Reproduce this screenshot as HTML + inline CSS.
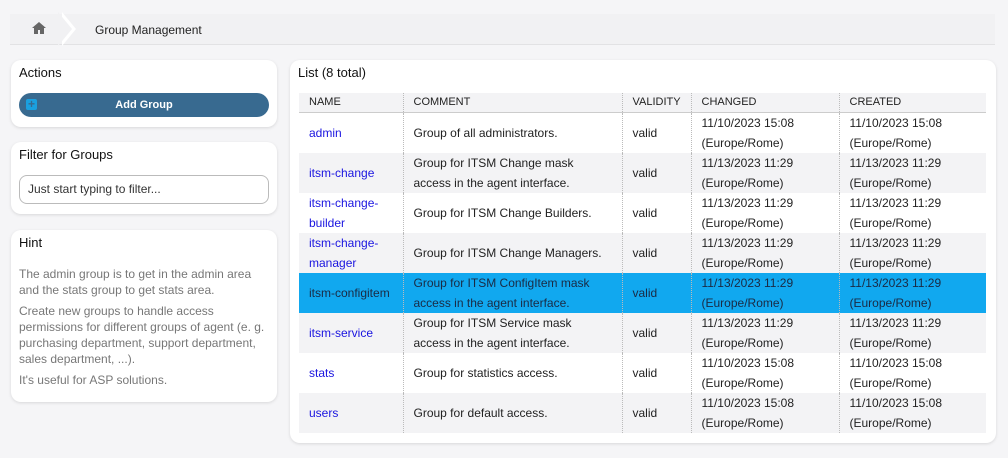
<!DOCTYPE html>
<html><head><style>
*{box-sizing:border-box;margin:0;padding:0}
body{width:1008px;height:458px;background:#f5f5f7;font-family:"Liberation Sans",Arial,sans-serif;font-size:12px;color:#222;position:relative;overflow:hidden}
.crumb{position:absolute;left:10px;top:14px;width:985px;height:31px;background:#f1f1f3;border-bottom:1px solid #e2e2e4}
.crumb .home{position:absolute;left:22px;top:8px}
.crumb .arrow{position:absolute;left:52px;top:-2px;width:0;height:0;border-top:17px solid transparent;border-bottom:17px solid transparent;border-left:14px solid #fff}
.crumb .arrow2{position:absolute;left:48px;top:-2px;width:0;height:0;border-top:17px solid transparent;border-bottom:17px solid transparent;border-left:14px solid #f1f1f3;z-index:2}
.crumb span{position:absolute;left:85px;top:9px;color:#222}
.box{position:absolute;background:#fff;border-radius:10px;box-shadow:0 1px 3px rgba(0,0,0,.12)}
.box h3{font-weight:normal;font-size:13px;position:absolute;left:8px;top:5px;color:#111}
.btn{position:absolute;left:8px;top:33px;width:250px;height:24px;background:#386a90;border-radius:12px;color:#fff;font-weight:bold;font-size:11px;text-align:center;line-height:24px}
.btn i{position:absolute;left:7px;top:6px;width:11px;height:11px;background:#1aa0e0;border-radius:2px;color:#386a90;font-style:normal;line-height:11px;font-size:12px}
.inp{position:absolute;left:8px;top:33px;width:250px;height:29px;border:1px solid #bbb;border-radius:8px;padding-left:8px;line-height:27px;color:#333}
.hint{position:absolute;left:8px;top:36px;width:252px;color:#777;line-height:16px}
.hint p{margin-bottom:5px}
table{position:absolute;left:9px;top:33px;width:687px;border-collapse:collapse}
th{height:19px;background:#f3f3f5;text-align:left;font-weight:normal;font-size:11px;padding-left:10px;border-bottom:1px solid #ccc;color:#222}
td{height:40px;padding-left:10px;line-height:20px;vertical-align:middle}
th+th,td+td{border-left:1px dotted #bbb}
tr.g td{background:#f3f3f5}
td a{color:#1a14e0;text-decoration:none}
tr.sel td{background:#11a8ef;color:#1a2a44}
tr.sel td a{color:#1a2a44}
</style></head><body>
<div class="crumb">
<svg class="home" width="14" height="12" viewBox="0 0 14 12"><path d="M7 0L0 6h2v6h4V8h2v4h4V6h2z" fill="#666"/></svg>
<div class="arrow"></div><div class="arrow2"></div>
<span>Group Management</span></div>

<div class="box" style="left:11px;top:60px;width:266px;height:67px"><h3>Actions</h3><div class="btn"><i>+</i>Add Group</div></div>
<div class="box" style="left:11px;top:142px;width:266px;height:72px"><h3>Filter for Groups</h3><div class="inp">Just start typing to filter...</div></div>
<div class="box" style="left:11px;top:230px;width:266px;height:172px"><h3>Hint</h3><div class="hint">
<p>The admin group is to get in the admin area and the stats group to get stats area.</p>
<p>Create new groups to handle access permissions for different groups of agent (e. g. purchasing department, support department, sales department, ...).</p>
<p>It's useful for ASP solutions.</p></div></div>

<div class="box" style="left:290px;top:60px;width:706px;height:383px"><h3>List (8 total)</h3>
<table>
<colgroup><col style="width:104px"><col style="width:219px"><col style="width:69px"><col style="width:148px"><col style="width:147px"></colgroup>
<tr><th>NAME</th><th>COMMENT</th><th>VALIDITY</th><th>CHANGED</th><th>CREATED</th></tr>
<tr><td><a>admin</a></td><td>Group of all administrators.</td><td>valid</td><td>11/10/2023 15:08<br>(Europe/Rome)</td><td>11/10/2023 15:08<br>(Europe/Rome)</td></tr>
<tr class="g"><td><a>itsm-change</a></td><td>Group for ITSM Change mask<br>access in the agent interface.</td><td>valid</td><td>11/13/2023 11:29<br>(Europe/Rome)</td><td>11/13/2023 11:29<br>(Europe/Rome)</td></tr>
<tr><td><a>itsm-change-<br>builder</a></td><td>Group for ITSM Change Builders.</td><td>valid</td><td>11/13/2023 11:29<br>(Europe/Rome)</td><td>11/13/2023 11:29<br>(Europe/Rome)</td></tr>
<tr class="g"><td><a>itsm-change-<br>manager</a></td><td>Group for ITSM Change Managers.</td><td>valid</td><td>11/13/2023 11:29<br>(Europe/Rome)</td><td>11/13/2023 11:29<br>(Europe/Rome)</td></tr>
<tr class="sel"><td><a>itsm-configitem</a></td><td>Group for ITSM ConfigItem mask<br>access in the agent interface.</td><td>valid</td><td>11/13/2023 11:29<br>(Europe/Rome)</td><td>11/13/2023 11:29<br>(Europe/Rome)</td></tr>
<tr class="g"><td><a>itsm-service</a></td><td>Group for ITSM Service mask<br>access in the agent interface.</td><td>valid</td><td>11/13/2023 11:29<br>(Europe/Rome)</td><td>11/13/2023 11:29<br>(Europe/Rome)</td></tr>
<tr><td><a>stats</a></td><td>Group for statistics access.</td><td>valid</td><td>11/10/2023 15:08<br>(Europe/Rome)</td><td>11/10/2023 15:08<br>(Europe/Rome)</td></tr>
<tr class="g"><td><a>users</a></td><td>Group for default access.</td><td>valid</td><td>11/10/2023 15:08<br>(Europe/Rome)</td><td>11/10/2023 15:08<br>(Europe/Rome)</td></tr>
</table></div>
</body></html>
